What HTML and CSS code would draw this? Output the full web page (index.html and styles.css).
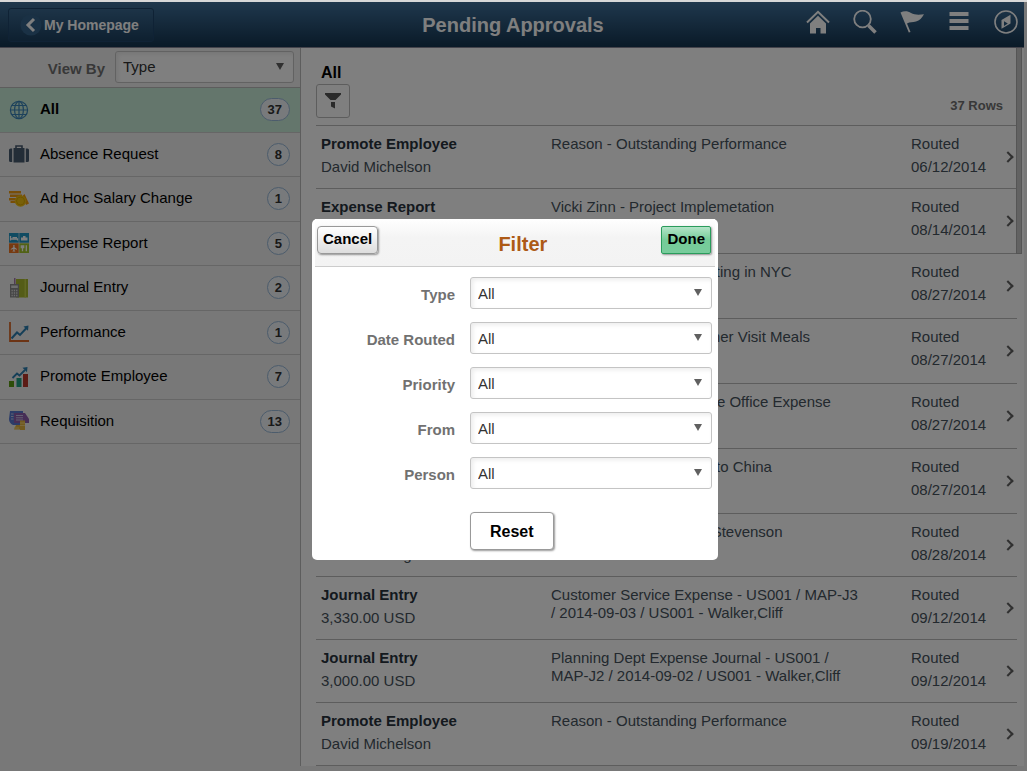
FILE: index.html
```html
<!DOCTYPE html>
<html lang="en">
<head>
    <meta charset="UTF-8">
    <meta name="viewport" content="width=device-width, initial-scale=1.0">
    <title>Pending Approvals</title>
    <link rel="stylesheet" href="styles.css">
</head>
<body>
    <div class="app">
        <header class="banner">
            <button class="back-btn" type="button">
                <svg width="22" height="22" viewBox="0 0 22 22"><circle cx="11" cy="11" r="10.5" fill="#35638a"/><path d="M14 5 L8 11 L14 17" fill="none" stroke="#fff" stroke-width="3"/></svg>
                <span>My Homepage</span>
            </button>
            <h1>Pending Approvals</h1>
            <nav class="banner-icons">
                <a href="#" aria-label="Home"><svg width="24" height="24" viewBox="0 0 24 24"><path d="M1 12.5 L12 1.8 L23 12.5" fill="none" stroke="#fff" stroke-width="2"/><path d="M4 13.5 L12 5.8 L20 13.5 V23.5 H14.5 V18 H10 V23.5 H4 Z" fill="#fff"/></svg></a>
                <a href="#" aria-label="Search"><svg width="24" height="24" viewBox="0 0 24 24"><circle cx="9.5" cy="9" r="8.3" fill="none" stroke="#fff" stroke-width="1.8"/><path d="M15.5 15.5 L22.5 22.5" stroke="#fff" stroke-width="3.6"/></svg></a>
                <a href="#" aria-label="Notifications"><svg width="24" height="24" viewBox="0 0 24 24"><path d="M0.5 2.5 C4 0.8 8 1 11 3 C14.500 5 19 5 24 4.200 C22 8 19.500 10.500 16 11.500 C12.500 12.500 10 11.800 7 13.500 L10.500 22 L8.800 22.500 Z" fill="#fff"/></svg></a>
                <a href="#" aria-label="Actions"><svg width="24" height="24" viewBox="0 0 24 24"><path d="M2.500 2 h19 v4 h-19z M2.500 9 h19 v4 h-19z M2.500 16 h19 v4 h-19z" fill="#fff"/></svg></a>
                <a href="#" aria-label="NavBar"><svg width="24" height="24" viewBox="0 0 24 24"><circle cx="12" cy="12" r="11" fill="none" stroke="#fff" stroke-width="1.600"/><path d="M7.500 10 L16.500 4.800 V13.500 L7.500 18.800 Z" fill="#fff"/><path d="M10 11.200 V16 L13.800 13.500 Z" fill="#2a567d"/></svg></a>
            </nav>
        </header>

        <div class="content">
            <aside class="sidebar">
                <div class="view-by">
                    <label for="viewBy">View By</label>
                    <div class="select-box">
                        <select id="viewBy"><option>Type</option></select>
                    </div>
                </div>
                <ul class="type-list">
                    <li class="active"><a href="#">
                        <svg width="20" height="20" viewBox="0 0 20 20" fill="none" stroke="#3b84b8" stroke-width="1.200"><circle cx="10" cy="10" r="8.600"/><ellipse cx="10" cy="10" rx="4.400" ry="8.600"/><path d="M10 1.400 V18.600 M1.400 10 H18.600 M2.800 5.500 H17.200 M2.800 14.500 H17.200"/></svg>
                        <span class="name">All</span><span class="count">37</span></a></li>
                    <li><a href="#">
                        <svg width="20" height="20" viewBox="0 0 20 20" fill="#465a6e"><path d="M7 4 V2 H13 V4" fill="none" stroke="#465a6e" stroke-width="1.600"/><path d="M4.500 4 H15.500 V18.500 H4.500 Z"/><path d="M3.200 4.500 V18 H1.500 Q0 18 0 16.500 V6 Q0 4.500 1.500 4.500 Z M16.800 4.500 H18.500 Q20 4.500 20 6 V16.500 Q20 18 18.500 18 H16.800 Z"/></svg>
                        <span class="name">Absence Request</span><span class="count">8</span></a></li>
                    <li><a href="#">
                        <svg width="20" height="20" viewBox="0 0 20 20"><path d="M0 2 H12 V4.500 H0 Z M1 5.500 H13 V8 H1 Z M0 9 H12 V11.500 H0 Z M1.500 12 H9 V14 H1.500 Z" fill="#f09c10"/><path d="M15.500 5 L20 14.500 L17 16 L13.500 7 Z" fill="#f09c10"/><circle cx="11.500" cy="12" r="5.800" fill="#f0c010"/><circle cx="11.500" cy="12" r="4" fill="none" stroke="#dca800"/></svg>
                        <span class="name">Ad Hoc Salary Change</span><span class="count">1</span></a></li>
                    <li><a href="#">
                        <svg width="20" height="20" viewBox="0 0 20 20"><path d="M0 0 H9.700 V9.700 H0 Z" fill="#2196c4"/><path d="M10.300 0 H20 V9.700 H10.300 Z" fill="#2196c4"/><path d="M0 10.300 H9.700 V20 H0 Z" fill="#ee7421"/><path d="M10.300 10.300 H20 V20 H10.300 Z" fill="#a3c52a"/><path d="M1.500 3 V7.500 M1.500 6 H8.500 V7.500" fill="none" stroke="#fff" stroke-width="1.300"/><path d="M3.500 4 H8 V5.500 H3.500 Z M12 4.500 H18.500 V7.500 H12 Z M14 3 H16.500 V4.500 H14 Z" fill="#fff"/><path d="M4.300 12 H5.500 V14.300 L8 16 V16.800 L5.500 16 V17.500 L6.500 18.600 H3.300 L4.300 17.500 V16 L1.800 16.800 V16 L4.300 14.300 Z" fill="#fff"/><path d="M13.500 12.300 V18.300 M12.300 12.300 V14.500 H14.700 V12.300 M17.300 12.300 V18.300" fill="none" stroke="#fff" stroke-width="1.300"/></svg>
                        <span class="name">Expense Report</span><span class="count">5</span></a></li>
                    <li><a href="#">
                        <svg width="20" height="20" viewBox="0 0 20 20"><path d="M5 0 H6.500 V10 H5 Z" fill="#a678a8"/><path d="M7 1 H19 V19.500 H7 Z" fill="#a8b82e"/><path d="M15.500 1 H17 V19.500 H15.500 Z" fill="#c2d048"/><path d="M1 6 H10 V19.500 H1 Z" fill="#8c8c8c"/><path d="M2.200 7.500 H8.800 V10 H2.200 Z" fill="#ddd"/><path d="M2.500 12.500 H8.700 M2.500 15 H8.700 M2.500 17.500 H8.700" stroke="#ddd" stroke-width="1.300" stroke-dasharray="1.300 1"/></svg>
                        <span class="name">Journal Entry</span><span class="count">2</span></a></li>
                    <li><a href="#">
                        <svg width="20" height="20" viewBox="0 0 20 20" fill="none"><path d="M1 0 V19 H20" stroke="#d9692a" stroke-width="1.800"/><path d="M2.500 16.500 L8 10.500 L11 13 L17.500 6" stroke="#2b7eb0" stroke-width="2"/><path d="M14.500 4.500 L19.500 3.500 L19 8.800 Z" fill="#2b7eb0"/></svg>
                        <span class="name">Performance</span><span class="count">1</span></a></li>
                    <li><a href="#">
                        <svg width="20" height="20" viewBox="0 0 20 20"><path d="M0 14 H5 V20 H0 Z" fill="#5a9a12"/><path d="M7.500 11 H12.500 V20 H7.500 Z" fill="#1fa085"/><path d="M14 7 H19 V20 H14 Z" fill="#b8392d"/><path d="M3.500 11 L8 6.500 L10.500 8.500 L16 3" fill="none" stroke="#2b7eb0" stroke-width="1.800"/><path d="M13.500 0.800 L18.500 0 L18 5.200 Z" fill="#2b7eb0"/></svg>
                        <span class="name">Promote Employee</span><span class="count">7</span></a></li>
                    <li><a href="#">
                        <svg width="20" height="20" viewBox="0 0 20 20"><path d="M1 0 H14 V14 H4 Q0 12 0 8 Z" fill="#5878d0"/><path d="M5 2 H16 L20 8 V12 H5 Z" fill="#8c5cac"/><path d="M2 3 H4.500 M2 5.500 H4.500 M2 8 H4.500 M7 4.500 H14 M7 6.800 H14 M7 9 H14" stroke="#c5c0e4"/><path d="M11 9.500 H16 V19 H11 Z M7 14 H11 V18.500 H5 Z" fill="#e4b43e"/><path d="M11 12 H16 M11 14.500 H16 M5 17 H10" stroke="#f4d47c"/></svg>
                        <span class="name">Requisition</span><span class="count">13</span></a></li>
                </ul>
            </aside>

            <main class="approvals">
                <div class="list-header">
                    <div>
                        <h2>All</h2>
                        <button class="filter-btn" type="button" aria-label="Filter">
                            <svg width="16" height="16" viewBox="0 0 16 16"><path d="M0 0 H16 V1.500 L10.500 7 H5.500 L0 1.500 Z M6 9 H10 V15.500 L6 13.500 Z" fill="#555"/></svg>
                        </button>
                    </div>
                    <span class="row-total">37 Rows</span>
                </div>
                <table class="approval-table">
                    <colgroup><col class="col-type"><col class="col-desc"><col class="col-date"><col class="col-go"></colgroup>
                    <tbody>
                        <tr><td><b>Promote Employee</b><br>David Michelson</td><td class="desc">Reason - Outstanding Performance</td><td>Routed<br>06/12/2014</td><td class="go"><i></i></td></tr>
                        <tr class="tall"><td><b>Expense Report</b><br>450.00 USD</td><td class="desc">Vicki Zinn - Project Implemetation</td><td>Routed<br>08/14/2014</td><td class="go"><i></i></td></tr>
                        <tr class="tall"><td><b>Expense Report</b><br>1,250.00 USD</td><td class="desc">Vicki Zinn - Training Meeting in NYC</td><td>Routed<br>08/27/2014</td><td class="go"><i></i></td></tr>
                        <tr class="tall"><td><b>Expense Report</b><br>320.00 USD</td><td class="desc">Susan Locherty - Customer Visit Meals</td><td>Routed<br>08/27/2014</td><td class="go"><i></i></td></tr>
                        <tr class="tall"><td><b>Expense Report</b><br>180.00 USD</td><td class="desc">Gertrude Locherty - Home Office Expense</td><td>Routed<br>08/27/2014</td><td class="go"><i></i></td></tr>
                        <tr class="tall"><td><b>Expense Report</b><br>2,400.00 USD</td><td class="desc">Robert Locherty - Travel to China</td><td>Routed<br>08/27/2014</td><td class="go"><i></i></td></tr>
                        <tr><td><b>Absence Request</b><br>Vernon Wong</td><td class="desc">Vacation day for Robert Stevenson</td><td>Routed<br>08/28/2014</td><td class="go"><i></i></td></tr>
                        <tr><td><b>Journal Entry</b><br>3,330.00 USD</td><td class="desc">Customer Service Expense - US001 / MAP-J3 / 2014-09-03 / US001 - Walker,Cliff</td><td>Routed<br>09/12/2014</td><td class="go"><i></i></td></tr>
                        <tr><td><b>Journal Entry</b><br>3,000.00 USD</td><td class="desc">Planning Dept Expense Journal - US001 / MAP-J2 / 2014-09-02 / US001 - Walker,Cliff</td><td>Routed<br>09/12/2014</td><td class="go"><i></i></td></tr>
                        <tr><td><b>Promote Employee</b><br>David Michelson</td><td class="desc">Reason - Outstanding Performance</td><td>Routed<br>09/19/2014</td><td class="go"><i></i></td></tr>
                    </tbody>
                </table>
                <div class="scroll-thumb"></div>
            </main>
        </div>
    </div>

    <div class="overlay">
        <form class="modal" role="dialog" aria-labelledby="filterTitle">
            <div class="modal-header">
                <button class="cancel-btn" type="button">Cancel</button>
                <h2 id="filterTitle">Filter</h2>
                <button class="done-btn" type="button">Done</button>
            </div>
            <div class="modal-body">
                <label for="type">Type</label>
                <div class="select-box"><select id="type"><option>All</option></select></div>
                <label for="dateRouted">Date Routed</label>
                <div class="select-box"><select id="dateRouted"><option>All</option></select></div>
                <label for="priority">Priority</label>
                <div class="select-box"><select id="priority"><option>All</option></select></div>
                <label for="from">From</label>
                <div class="select-box"><select id="from"><option>All</option></select></div>
                <label for="person">Person</label>
                <div class="select-box"><select id="person"><option>All</option></select></div>
                <button class="reset-btn" type="reset">Reset</button>
            </div>
        </form>
    </div>
</body>
</html>
```
FILE: styles.css
```css
* {
    box-sizing: border-box;
}

body {
    margin: 0;
    border-top: 2px solid #d8d8d8;
    background-color: #f0f0f0;
    font-family: "Liberation Sans", Arial, sans-serif;
    font-size: 15px;
    color: #46525c;
    overflow: hidden;
}

h1, h2 {
    margin: 0;
}

button, select {
    font-family: inherit;
    cursor: pointer;
}

a {
    color: inherit;
    text-decoration: none;
}

svg {
    display: block;
    flex: none;
}

.app {
    height: calc(100vh - 2px);
    padding: 0 3px 5px 0;
    display: flex;
    flex-direction: column;
}

/* Banner */
.banner {
    display: grid;
    grid-template-columns: 1fr auto 1fr;
    align-items: center;
    height: 46px;
    flex: none;
    padding: 0 6px 0 8px;
    background: linear-gradient(#40709a, #36648c 20%, #14344f);
    border-bottom: 1px solid #889;
    color: #fff;
}

.banner h1 {
    padding-top: 2px;
    font-size: 20px;
}

.back-btn {
    justify-self: start;
    display: flex;
    align-items: center;
    gap: 2px;
    height: 34px;
    padding: 0 14px 0 11px;
    border: 1px solid #1f456a;
    border-radius: 3px;
    background: linear-gradient(#3a6890, #1c4060);
    color: #fff;
    font-size: 14px;
    font-weight: bold;
}

.banner-icons {
    justify-self: end;
    display: flex;
    gap: 23px;
    padding-bottom: 5px;
}

.content {
    display: flex;
    flex: 1;
    min-height: 0;
}

/* Sidebar */
.sidebar {
    width: 301px;
    flex: none;
    background-color: #f0f0f0;
    border-right: 1px solid #bbb;
    color: #000;
}

.view-by {
    display: flex;
    align-items: center;
    justify-content: flex-end;
    gap: 10px;
    height: 40px;
    padding: 0 6px 2px 0;
    border-bottom: 1px solid #bbb;
}

.view-by .select-box {
    width: 179px;
}

.view-by label,
.modal-body label {
    padding-top: 3px;
    color: #717171;
    font-weight: bold;
}

.type-list {
    display: grid;
    grid-auto-rows: 1fr;
    min-height: 356px;
    margin: 0;
    padding: 0;
    list-style: none;
}

.type-list li {
    display: flex;
    border-bottom: 1px solid #ccc;
}

.type-list a {
    display: flex;
    flex: 1;
    align-items: center;
    padding: 0 10px 0 9px;
}

.name {
    flex: 1;
    padding: 0 0 2px 11px;
}

.active {
    background-color: #c8ecd8;
    font-weight: bold;
}

.count {
    min-width: 23px;
    padding: 0 7px;
    border: 1px solid #98b8d8;
    border-radius: 12px;
    background-color: #f0f4f8;
    color: #333;
    font-size: 13px;
    font-weight: bold;
    line-height: 21px;
    text-align: center;
}

/* Approval list */
.approvals {
    position: relative;
    flex: 1;
    min-width: 0;
    padding: 0 7px 0 15px;
    background-color: #fff;
}

.list-header {
    display: flex;
    align-items: flex-end;
    justify-content: space-between;
    height: 78px;
    padding: 0 14px 7px 0;
    border-bottom: 1px solid #bbb;
}

.list-header h2 {
    padding: 0 0 2px 5px;
    color: #000;
    font-size: 16px;
}

.filter-btn {
    display: flex;
    align-items: center;
    justify-content: center;
    width: 34px;
    height: 34px;
    padding: 0;
    border: 1px solid #bbb;
    border-radius: 3px;
    background-color: #fff;
}

.row-total {
    padding-bottom: 5px;
    color: #717171;
    font-size: 13px;
    font-weight: bold;
}

.approval-table {
    width: 100%;
    table-layout: fixed;
    border-collapse: separate;
    border-spacing: 0;
}

.col-type {
    width: 230px;
}

.col-date {
    width: 96px;
}

.col-go {
    width: 15px;
}

.approval-table td {
    height: 63px;
    padding: 6px 0 0 5px;
    border-bottom: 1px solid #bbb;
    line-height: 23px;
    vertical-align: top;
}

.approval-table .tall td {
    height: 65px;
}

.approval-table .desc {
    padding: 9px 45px 0 5px;
    line-height: 18px;
}

.approval-table .go {
    padding: 0 0 0 2px;
    vertical-align: middle;
}

.go i {
    display: block;
    width: 8px;
    height: 8px;
    border: solid #606060;
    border-width: 2px 2px 0 0;
    transform: rotate(45deg);
}

.approval-table b {
    color: #28323c;
}

.scroll-thumb {
    position: absolute;
    top: 0;
    right: 2px;
    width: 6px;
    height: 206px;
    background-color: #c4c4c4;
    border: solid #aaa;
    border-width: 0 1px 1px;
}

/* Drop-downs */
.select-box {
    position: relative;
}

.select-box select {
    display: block;
    width: 100%;
    height: 32px;
    padding: 0 24px 0 7px;
    border: 1px solid #c4c4c4;
    border-radius: 3px;
    background-color: #fff;
    box-shadow: inset 2px 2px 4px rgba(0,0,0,0.08);
    color: #333;
    font-size: 15px;
    appearance: none;
}

.select-box::after {
    content: "";
    position: absolute;
    top: 12px;
    right: 10px;
    border: solid transparent;
    border-width: 7px 4px 0;
    border-top-color: #606060;
    pointer-events: none;
}

/* Filter dialog */
.overlay {
    position: fixed;
    inset: 2px 0 0;
    display: flex;
    align-items: flex-start;
    justify-content: center;
    padding: 217px 0 0 3px;
    background-color: rgba(0,0,0,0.5);
}

.modal {
    width: 406px;
    padding: 0 3px 10px;
    border-radius: 5px;
    background-color: #fff;
}

.modal-header {
    display: flex;
    align-items: flex-start;
    justify-content: space-between;
    height: 48px;
    padding: 7px 4px 0 2px;
    background: linear-gradient(#fff, #f4f4f4 40%, #f3f3f3);
    border-bottom: 1px solid #ccc;
}

.modal-header h2 {
    padding: 7px 0 0 6px;
    color: #ad5a16;
    font-size: 20px;
}

.modal-header button {
    height: 28px;
    padding: 0 5px 4px;
    border: 1px solid #999;
    border-radius: 4px;
    background: linear-gradient(#fff, #ddd);
    box-shadow: 1px 1px 2px rgba(0,0,0,0.4);
    color: #000;
    font-size: 15px;
    font-weight: bold;
}

.modal-header .done-btn {
    border-color: #2a9c5c;
    border-radius: 2px;
    background: linear-gradient(#b4e4c8, #74cc98 50%, #78cc9c);
}

.modal-body {
    display: grid;
    grid-template-columns: 140px 1fr;
    gap: 13px 15px;
    align-items: center;
    padding: 10px 3px 0 0;
}

.modal-body label {
    text-align: right;
}

.reset-btn {
    grid-column: 2;
    justify-self: start;
    height: 38px;
    margin-top: 10px;
    padding: 1px 19px 0;
    border: 1px solid #999;
    border-radius: 4px;
    background-color: #fff;
    box-shadow: 1px 1px 2px rgba(0,0,0,0.4);
    color: #000;
    font-size: 16px;
    font-weight: bold;
}
```
